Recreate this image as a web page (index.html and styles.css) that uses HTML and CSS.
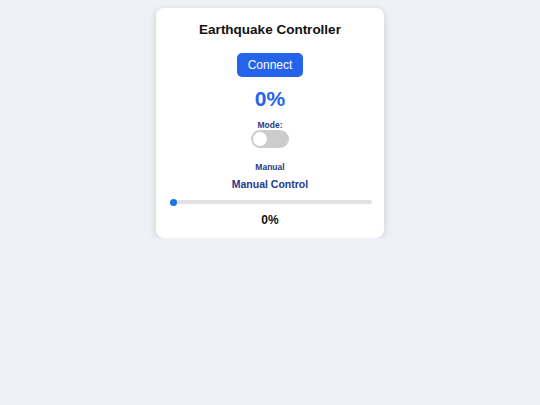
FILE: index.html
```html
<!DOCTYPE html>
<html lang="en">
<head>
    <meta charset="UTF-8">
    <meta name="viewport" content="width=device-width, initial-scale=1.0">
    <title>Earthquake Controller</title>
    <link rel="stylesheet" href="styles.css">
</head>
<body>
    <div class="card">
        <h1>Earthquake Controller</h1>

        <button class="connect-btn">Connect</button>

        <div class="value">0%</div>

        <div class="mode">
            <div class="mode-label">Mode:</div>
            <label class="switch">
                <input type="checkbox">
                <span class="knob"></span>
            </label>
            <div class="mode-name">Manual</div>
        </div>

        <div class="manual">
            <h2>Manual Control</h2>
            <div class="track"><span class="thumb"></span></div>
            <div class="slider-value">0%</div>
        </div>
    </div>
</body>
</html>
```

FILE: styles.css
```css
body { font-family: "Liberation Sans", Arial, sans-serif; margin: 0; background: #eef1f6; }
.card { width: 200px; margin: 8px auto 0; background: #fff; border-radius: 8px; padding: 10px 14px 11px; text-align: center; box-shadow: 0 2px 8px rgba(0,0,0,0.15); }
h1 { font-size: 13.5px; line-height: 17px; margin: 3px 0 15px; color: #111; }
.connect-btn { background: #2563eb; color: #fff; border: none; border-radius: 5px; font-family: inherit; font-size: 12px; width: 66px; height: 24px; padding: 0; line-height: 14px; }
.value { font-size: 21px; font-weight: bold; color: #2563eb; margin-top: 9px; line-height: 26px; }
.mode { margin-top: 8px; }
.mode-label { font-size: 8.5px; font-weight: bold; color: #1e3a8a; line-height: 10px; }
.switch { display: inline-block; position: relative; width: 38px; height: 18px; margin-top: 0; }
.switch input { display: none; }
.knob { position: absolute; inset: 0; background: #ccc; border-radius: 9px; }
.knob::before { content: ""; position: absolute; left: 2px; top: 2px; width: 14px; height: 14px; border-radius: 50%; background: #fff; }
.mode-name { font-size: 8.5px; font-weight: bold; color: #1e3a8a; margin-top: 10px; line-height: 10px; }
h2 { font-size: 10.5px; color: #1e3a8a; margin: 6px 0 9px; line-height: 13px; }
.track { position: relative; height: 4px; background: #e2e2e2; border-radius: 2px; margin-right: -2px; }
.thumb { position: absolute; left: 0; top: -1.5px; width: 7px; height: 7px; border-radius: 50%; background: #1a73e8; }
.slider-value { font-size: 12px; font-weight: bold; color: #111; margin-top: 9px; line-height: 14px; }
```
